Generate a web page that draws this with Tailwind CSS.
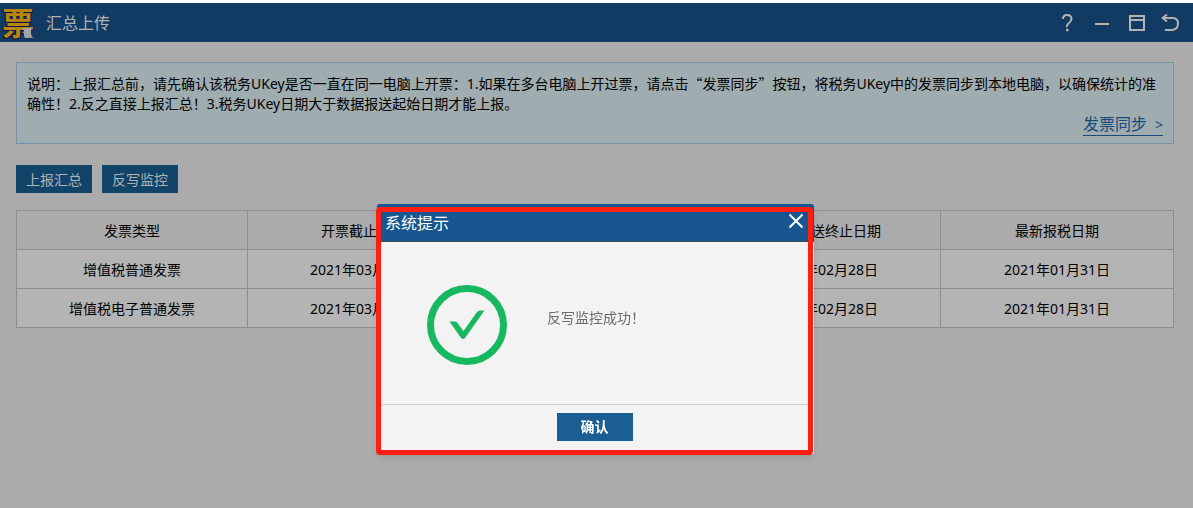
<!DOCTYPE html>
<html lang="zh-CN">
<head>
  <meta charset="UTF-8">
  <meta name="viewport" content="width=device-width, initial-scale=1.0">
  <title>汇总上传</title>
  <script src="https://cdn.jsdelivr.net/npm/@tailwindcss/browser@4"></script>
</head>
<body class="min-h-screen flex flex-col bg-[#ababab] border-t-3 border-white font-['Noto_Sans','Noto_Sans_CJK_SC',sans-serif] text-sm text-black">
  <!-- Title bar -->
  <header class="h-[39px] shrink-0 flex items-center justify-between bg-[#113b63] pl-[2px] pr-3 text-[#b3b3b3]">
    <div class="flex items-center gap-3">
      <div class="relative w-8 h-8">
        <span class="block text-[32px] leading-8 font-bold text-[#b8860f] [text-shadow:1px_1px_0_#0a1440,-1px_1px_0_#0a1440]">票</span>
        <svg class="absolute right-0 bottom-0 w-3 h-3" viewBox="0 0 12 12">
          <path d="M0 1h8q1 0 1 2v5q0 2 3 3H4q-2 0-2-3V4q0-2-2-3z" fill="#a3a3a8"/>
        </svg>
      </div>
      <h1 class="text-base">汇总上传</h1>
    </div>
    <div class="flex items-center gap-4">
      <button aria-label="帮助">
        <svg class="w-5 h-5" viewBox="0 0 20 20" fill="none" stroke="currentColor" stroke-width="2">
          <path d="M5 6q0-4 4-4t4.500 3.500q0 2.500-2.500 4.500T9 14"/>
          <path d="M8 17h2.500" stroke-width="2.500"/>
        </svg>
      </button>
      <button aria-label="最小化">
        <svg class="w-4 h-5" viewBox="0 0 16 20" fill="none" stroke="currentColor" stroke-width="2">
          <path d="M1 11h14"/>
        </svg>
      </button>
      <button aria-label="最大化" class="pl-[3px]">
        <svg class="w-4 h-5" viewBox="0 0 16 20" fill="none" stroke="currentColor" stroke-width="2">
          <path d="M1 3h14v14H1zM1 7h14"/>
        </svg>
      </button>
      <button aria-label="返回">
        <svg class="w-5 h-5" viewBox="1 0 20 20" fill="none" stroke="currentColor" stroke-width="2">
          <path d="M7 1.500L2.500 5 7 8.500M3 5h9.500q5.500 0 5.500 5.500T12.500 17H5"/>
        </svg>
      </button>
    </div>
  </header>

  <main class="px-4 pt-5 pr-[19px]">
    <!-- Notice -->
    <section class="min-h-[82px] border border-[#7893a8] bg-[#9facb0] px-[10px] pt-[10px] pb-[7px] leading-5">
      <p>说明：上报汇总前，请先确认该税务UKey是否一直在同一电脑上开票：1.如果在多台电脑上开过票，请点击<span class="font-['Noto_Sans_CJK_SC',sans-serif]">“发票同步”</span>按钮，将税务UKey中的发票同步到本地电脑，以确保统计的准确性！2.反之直接上报汇总！3.税务UKey日期大于数据报送起始日期才能上报。</p>
      <div class="flex justify-end">
        <a href="#" class="text-base leading-5 text-[#164a7c] border-b border-[#164a7c]">发票同步<span class="pl-2 text-sm">&gt;</span></a>
      </div>
    </section>

    <div class="flex gap-[10px] mt-[21px]">
      <button class="w-[76px] h-7 pt-[2px] bg-[#124469] text-[#b3b3b3]">上报汇总</button>
      <button class="w-[76px] h-7 pt-[2px] bg-[#124469] text-[#b3b3b3]">反写监控</button>
    </div>

    <table class="w-full table-fixed border-collapse mt-[17px] text-center [&_th]:h-[39px] [&_td]:h-[39px] [&_th]:pt-[2px] [&_td]:pt-[2px] [&_th]:font-normal [&_th]:border [&_td]:border [&_th]:border-[#8e8e8e] [&_td]:border-[#8e8e8e]">
      <thead>
        <tr>
          <th>发票类型</th>
          <th>开票截止日期</th>
          <th>数据报送起始日期</th>
          <th>数据报送终止日期</th>
          <th class="w-[233px]">最新报税日期</th>
        </tr>
      </thead>
      <tbody class="bg-[#b4b4b4]">
        <tr>
          <td>增值税普通发票</td>
          <td>2021年03月31日</td>
          <td>2021年02月01日</td>
          <td>2021年02月28日</td>
          <td>2021年01月31日</td>
        </tr>
        <tr>
          <td>增值税电子普通发票</td>
          <td>2021年03月31日</td>
          <td>2021年02月01日</td>
          <td>2021年02月28日</td>
          <td>2021年01月31日</td>
        </tr>
      </tbody>
    </table>
  </main>

  <!-- Message dialog -->
  <div class="fixed inset-0 flex items-start justify-center pt-[204px] pr-[2px]">
    <div role="dialog" aria-modal="true" aria-labelledby="dialog-title" class="relative w-[437px] bg-[#f3f3f3] rounded-t-xs shadow-md">
      <div class="h-[38px] flex items-center justify-between bg-[#175691] border-b border-[#404b55] pl-2 pr-[10px] text-white rounded-t-xs">
        <h2 id="dialog-title" class="text-base">系统提示</h2>
        <button aria-label="关闭" class="pb-1">
          <svg class="w-4 h-4" viewBox="0 0 16 16" fill="none" stroke="currentColor" stroke-width="2">
            <path d="M1.500 1.500l13 13M14.500 1.500l-13 13"/>
          </svg>
        </button>
      </div>
      <div class="h-[162px] flex items-center gap-10 pl-[50px]">
        <svg class="w-20 h-20 mt-1" viewBox="0 0 80 80">
          <circle cx="40" cy="40" r="36.500" fill="none" stroke="#18b860" stroke-width="7"/>
          <path d="M22.500 36.500h5.500q1.500 0 2.500 1.500l6 8L50 27q1.500-1.500 3-1.500h4.500L38 53q-2 2-4 0z" fill="#18b860"/>
        </svg>
        <p class="pb-[10px] text-[#6b6b6b]">反写监控成功！</p>
      </div>
      <div class="h-[50px] border-t border-[#cfcfcf] flex justify-center pt-2 pr-[2px]">
        <button class="w-[76px] h-7 bg-[#1b5e94] text-white font-bold">确认</button>
      </div>
      <!-- Highlight frame -->
      <div class="absolute top-[3px] -bottom-px -left-px right-px border-5 border-[#ff1f12] rounded-sm pointer-events-none"></div>
    </div>
  </div>
</body>
</html>
